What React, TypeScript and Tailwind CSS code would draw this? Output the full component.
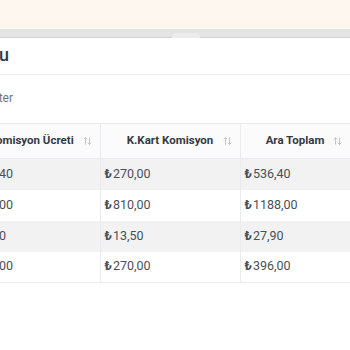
const columns = [
  { key: "komisyon", title: "Komisyon Ücreti", width: "w-[137px]" },
  { key: "kkart", title: "K.Kart Komisyon", width: "w-[140px]" },
  { key: "ara", title: "Ara Toplam", width: "w-[110px]" },
];

const rows = [
  { komisyon: "266,40", kkart: "270,00", ara: "536,40" },
  { komisyon: "378,00", kkart: "810,00", ara: "1188,00" },
  { komisyon: "14,40", kkart: "13,50", ara: "27,90" },
  { komisyon: "126,00", kkart: "270,00", ara: "396,00" },
];

function SortIcon() {
  return (
    <svg width="9" height="9" viewBox="0 0 9 9" fill="none" stroke="#c4c7ca" strokeWidth="1" className="absolute right-[8px] top-1/2 -translate-y-1/2">
      <path d="M2.5 8V1M0.8 2.8L2.5 1L4.2 2.8" />
      <path d="M6.5 1V8M4.8 6.2L6.5 8L8.2 6.2" />
    </svg>
  );
}

export default function App() {
  return (
    <div className="w-[350px] h-[350px] overflow-hidden bg-white font-['Roboto',sans-serif]">
      <div className="h-[29px] bg-[#fef7ef]" />
      <div className="relative h-[9px] bg-[#e4e4e4] border-b border-[#d4d4d4]">
        <div className="absolute left-[172px] top-[4px] w-[28px] h-[5px] rounded-t-sm bg-[#ececec]" />
      </div>

      <div className="h-[28px] flex items-end">
        <div className="w-[9px] flex justify-end whitespace-nowrap text-[18px] leading-[22px] font-medium text-[#343a40]">
          Komisyon Raporu
        </div>
      </div>
      <div className="mt-[8px] border-b border-[#e9ecef]" />

      <div className="h-[30px] flex items-end">
        <div className="w-[13px] flex justify-end whitespace-nowrap text-[12px] leading-[14px] text-[#6c757d]">
          Filtreleri Göster
        </div>
      </div>

      <table className="mt-[18px] ml-[-37px] w-[387px] table-fixed border-collapse">
        <thead>
          <tr className="bg-[#fbfbfb]">
            {columns.map((c) => (
              <th
                key={c.key}
                className={`${c.width} relative h-[35px] border-t border-b border-r border-[#e9ecef] text-center text-[11.5px] font-bold text-[#343a40] whitespace-nowrap`}
              >
                {c.title}
                <SortIcon />
              </th>
            ))}
          </tr>
        </thead>
        <tbody>
          {rows.map((r, i) => (
            <tr key={i} className={i % 2 === 0 ? "bg-[#f2f2f2]" : "bg-white"}>
              {columns.map((c) => (
                <td
                  key={c.key}
                  className="h-[31px] pl-[4px] border-r border-[#e9ecef] text-[12.5px] text-[#495057] whitespace-nowrap"
                >
                  <span className="mr-[1px] font-bold">₺</span>
                  {r[c.key as keyof typeof r]}
                </td>
              ))}
            </tr>
          ))}
          <tr>
            <td colSpan={3} className="h-0 border-t border-[#ececec]" />
          </tr>
        </tbody>
      </table>
    </div>
  );
}
